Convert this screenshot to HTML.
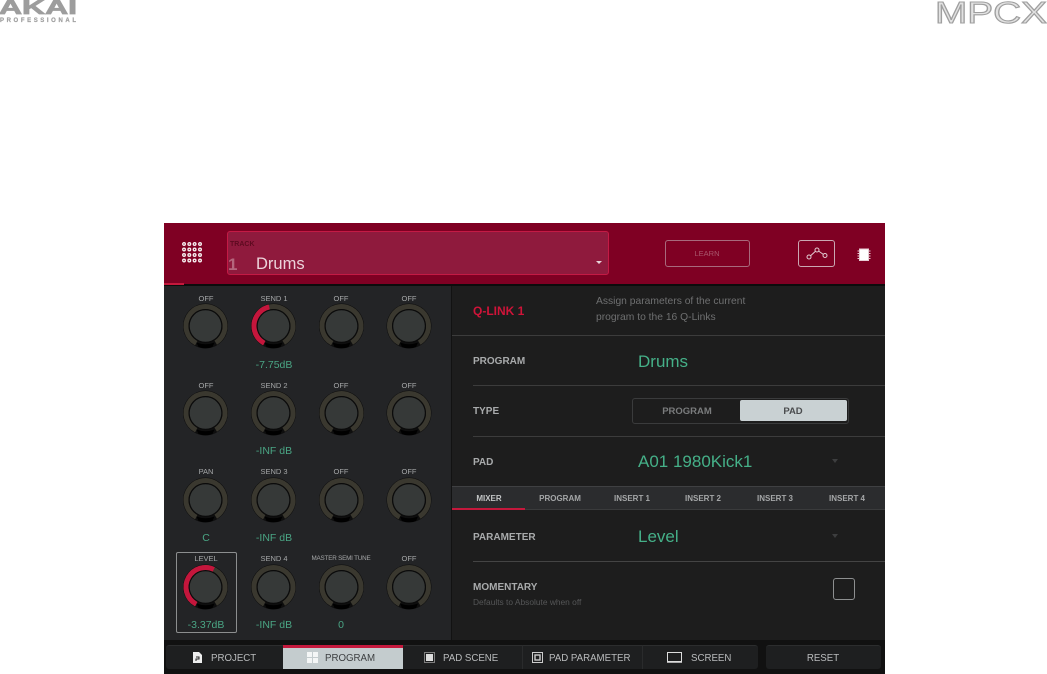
<!DOCTYPE html>
<html><head><meta charset="utf-8">
<style>
html,body{margin:0;padding:0;background:#fff;}
#r{position:relative;width:1047px;height:674px;overflow:hidden;background:#fff;font-family:"Liberation Sans",sans-serif;}
.a{position:absolute;}
.t{position:absolute;white-space:nowrap;line-height:1;}
.c{transform:translateX(-50%);text-align:center;}
.kl{font-size:7.5px;color:#a5a7a8;}
.kv{font-size:10.5px;color:#4aa584;}
.lab{font-size:10px;font-weight:bold;color:#a9abac;}
.val{font-size:17px;color:#45b088;}
.tab{font-size:8px;color:#a5a7a8;font-weight:bold;}
.bt{font-size:9.7px;color:#b9bbbc;}
.hr{position:absolute;height:1px;background:#3c3c3c;right:162px;}
svg{position:absolute;overflow:visible;}
</style></head><body><div id="r">

<svg class="a" style="left:0;top:0" width="1047" height="30">
<text x="-1" y="14" font-family="Liberation Sans" font-weight="bold" font-size="20" fill="#9d9d9d" stroke="#9d9d9d" stroke-width="0.8" textLength="78" lengthAdjust="spacingAndGlyphs">AKAI</text>
<text x="0" y="22" font-family="Liberation Sans" font-weight="bold" font-size="6" fill="#a0a0a0" stroke="#a0a0a0" stroke-width="0.2" textLength="76" lengthAdjust="spacing">PROFESSIONAL</text>
<text x="935" y="23" font-family="Liberation Sans" font-size="31" fill="#e2e2e2" stroke="#9f9f9f" stroke-width="1.1" textLength="112" lengthAdjust="spacingAndGlyphs">MPCX</text>
</svg>

<!-- app shell -->
<div class="a" style="left:164px;top:223px;width:721px;height:451px;background:#1d1d1d"></div>
<div class="a" style="left:164px;top:223px;width:721px;height:61px;background:#7f0023"></div>
<div class="a" style="left:164px;top:284px;width:721px;height:2px;background:#0c0c0c"></div>
<div class="a" style="left:164px;top:283px;width:20px;height:2px;background:#c4183c"></div>
<div class="a" style="left:164px;top:286px;width:287px;height:354px;background:#232426"></div>
<div class="a" style="left:451px;top:286px;width:1px;height:354px;background:#121212"></div>

<!-- pads icon -->
<svg style="left:182px;top:242px" width="22" height="22" fill="none" stroke="#f5ecee" stroke-width="1.4">
<circle cx="2" cy="2" r="1.3"/><circle cx="7.3" cy="2" r="1.3"/><circle cx="12.6" cy="2" r="1.3"/><circle cx="18" cy="2" r="1.3"/>
<circle cx="2" cy="7.5" r="1.3"/><circle cx="7.3" cy="7.5" r="1.3"/><circle cx="12.6" cy="7.5" r="1.3"/><circle cx="18" cy="7.5" r="1.3"/>
<circle cx="2" cy="13" r="1.3"/><circle cx="7.3" cy="13" r="1.3"/><circle cx="12.6" cy="13" r="1.3"/><circle cx="18" cy="13" r="1.3"/>
<circle cx="2" cy="18.5" r="1.3"/><circle cx="7.3" cy="18.5" r="1.3"/><circle cx="12.6" cy="18.5" r="1.3"/><circle cx="18" cy="18.5" r="1.3"/>
</svg>

<!-- track -->
<div class="a" style="left:227px;top:231px;width:380px;height:42px;background:#8f1a3d;border:1px solid #c41a45;border-radius:3px"></div>
<div class="t" style="left:230px;top:241px;font-size:7px;font-weight:bold;color:#5e0a20">TRACK</div>
<div class="t" style="left:228px;top:256px;font-size:17px;font-weight:bold;color:#b5667d">1</div>
<div class="t" style="left:256px;top:256px;font-size:16.5px;color:#ecd3da">Drums</div>
<svg style="left:596px;top:261px" width="7" height="4"><path d="M0 0H6L3 3Z" fill="#e8d5da"/></svg>

<!-- learn -->
<div class="a" style="left:665px;top:240px;width:83px;height:25px;border:1px solid #a8697c;border-radius:3px"></div>
<div class="t c" style="left:707px;top:250px;font-size:7.5px;color:#a8566c">LEARN</div>
<!-- env button -->
<div class="a" style="left:798px;top:240px;width:35px;height:25px;border:1px solid #caa7b2;border-radius:3px"></div>
<svg style="left:806px;top:246px" width="22" height="14" fill="none" stroke="#e3ccd3" stroke-width="1">
<circle cx="3" cy="11" r="2"/><circle cx="11" cy="4" r="2"/><circle cx="19" cy="9.5" r="2"/><path d="M4.6 9.7L9.5 5.3M12.7 5.1L17.3 8.4"/>
</svg>
<!-- chip -->
<svg style="left:857px;top:248px" width="14" height="13">
<rect x="2.5" y="1" width="9" height="11.5" fill="#fff" stroke="#e8cdd5"/>
<path d="M0.5 3H2.5M0.5 5.5H2.5M0.5 8H2.5M0.5 10.5H2.5M11.5 3H13.5M11.5 5.5H13.5M11.5 8H13.5M11.5 10.5H13.5" stroke="#e8cdd5" stroke-width="1"/>
</svg>

<!-- knobs -->
<svg style="left:0;top:0" width="1047" height="674">
<defs>
<g id="k">
<circle r="22.5" fill="#0e0e0e"/>
<circle r="19.5" fill="none" stroke="#3a382f" stroke-width="5" pathLength="360" stroke-dasharray="300 60" transform="rotate(120)"/>
<circle r="17" fill="#0b0b0b"/>
<circle r="15.8" fill="#363938"/>
<path d="M-9 16.5Q0 20 9 16.5L7 21Q0 23.5 -7 21Z" fill="#000"/>
</g>
</defs>
<use href="#k" x="205.5" y="326"/><use href="#k" x="273.5" y="326"/><use href="#k" x="341.5" y="326"/><use href="#k" x="409" y="326"/>
<use href="#k" x="205.5" y="413"/><use href="#k" x="273.5" y="413"/><use href="#k" x="341.5" y="413"/><use href="#k" x="409" y="413"/>
<use href="#k" x="205.5" y="500"/><use href="#k" x="273.5" y="500"/><use href="#k" x="341.5" y="500"/><use href="#k" x="409" y="500"/>
<use href="#k" x="205.5" y="587"/><use href="#k" x="273.5" y="587"/><use href="#k" x="341.5" y="587"/><use href="#k" x="409" y="587"/>
<circle cx="273.5" cy="326" r="19.5" fill="none" stroke="#c4163c" stroke-width="5" pathLength="360" stroke-dasharray="138 222" transform="rotate(120 273.5 326)"/>
<circle cx="205.5" cy="587" r="19.5" fill="none" stroke="#c4163c" stroke-width="5" pathLength="360" stroke-dasharray="176 184" transform="rotate(120 205.5 587)"/>
</svg>
<div class="a" style="left:176px;top:552px;width:59px;height:79px;border:1px solid #8c8e8f;border-radius:2px"></div>

<div class="t c kl" style="left:206px;top:295px">OFF</div><div class="t c kl" style="left:274px;top:295px">SEND 1</div><div class="t c kl" style="left:341px;top:295px">OFF</div><div class="t c kl" style="left:409px;top:295px">OFF</div>
<div class="t c kl" style="left:206px;top:382px">OFF</div><div class="t c kl" style="left:274px;top:382px">SEND 2</div><div class="t c kl" style="left:341px;top:382px">OFF</div><div class="t c kl" style="left:409px;top:382px">OFF</div>
<div class="t c kl" style="left:206px;top:468px">PAN</div><div class="t c kl" style="left:274px;top:468px">SEND 3</div><div class="t c kl" style="left:341px;top:468px">OFF</div><div class="t c kl" style="left:409px;top:468px">OFF</div>
<div class="t c kl" style="left:206px;top:555px">LEVEL</div><div class="t c kl" style="left:274px;top:555px">SEND 4</div><div class="t c kl" style="left:341px;top:556px;font-size:6.3px;letter-spacing:-.2px">MASTER SEMI TUNE</div><div class="t c kl" style="left:409px;top:555px">OFF</div>

<div class="t c kv" style="left:274px;top:360px">-7.75dB</div>
<div class="t c kv" style="left:274px;top:446px">-INF dB</div>
<div class="t c kv" style="left:206px;top:533px">C</div>
<div class="t c kv" style="left:274px;top:533px">-INF dB</div>
<div class="t c kv" style="left:206px;top:620px">-3.37dB</div>
<div class="t c kv" style="left:274px;top:620px">-INF dB</div>
<div class="t c kv" style="left:341px;top:620px">0</div>

<!-- right -->
<div class="t" style="left:473px;top:305px;font-size:12px;font-weight:bold;color:#cf1439">Q-LINK 1</div>
<div class="t" style="left:596px;top:297px;font-size:10.3px;color:#6f7071">Assign parameters of the current</div>
<div class="t" style="left:596px;top:313px;font-size:10.3px;color:#6f7071">program to the 16 Q-Links</div>
<div class="hr" style="left:452px;top:335px"></div>
<div class="t lab" style="left:473px;top:357px">PROGRAM</div>
<div class="t val" style="left:638px;top:353px">Drums</div>
<div class="hr" style="left:473px;top:385px"></div>
<div class="t lab" style="left:473px;top:407px">TYPE</div>
<div class="a" style="left:632px;top:398px;width:215px;height:24px;border:1px solid #3a3b3c;border-radius:3px"></div>
<div class="t c" style="left:687px;top:407px;font-size:9.5px;color:#7a7c7d;font-weight:bold">PROGRAM</div>
<div class="a" style="left:740px;top:400px;width:107px;height:21px;background:#c9d1d3;border-radius:2px"></div>
<div class="t c" style="left:793px;top:407px;font-size:9.5px;color:#4a4c4e;font-weight:bold">PAD</div>
<div class="hr" style="left:473px;top:436px"></div>
<div class="t lab" style="left:473px;top:458px">PAD</div>
<div class="t val" style="left:638px;top:453px">A01 1980Kick1</div>
<svg style="left:832px;top:459px" width="7" height="5"><path d="M0 0H6L3 4Z" fill="#3d3e3f"/></svg>

<!-- tabs -->
<div class="a" style="left:452px;top:486px;width:433px;height:24px;background:#2b2c2e;border-top:1px solid #3f4042;box-sizing:border-box;border-bottom:1px solid #3a3b3c"></div>
<div class="a" style="left:452px;top:508px;width:73px;height:2px;background:#c4183c"></div>
<div class="t c tab" style="left:489px;top:495px;color:#c3c5c6">MIXER</div>
<div class="t c tab" style="left:560px;top:495px">PROGRAM</div>
<div class="t c tab" style="left:632px;top:495px">INSERT 1</div>
<div class="t c tab" style="left:703px;top:495px">INSERT 2</div>
<div class="t c tab" style="left:775px;top:495px">INSERT 3</div>
<div class="t c tab" style="left:847px;top:495px">INSERT 4</div>

<div class="t lab" style="left:473px;top:533px">PARAMETER</div>
<div class="t val" style="left:638px;top:528px">Level</div>
<svg style="left:832px;top:534px" width="7" height="5"><path d="M0 0H6L3 4Z" fill="#3d3e3f"/></svg>
<div class="hr" style="left:473px;top:561px;background:#444"></div>
<div class="t lab" style="left:473px;top:583px">MOMENTARY</div>
<div class="t" style="left:473px;top:598px;font-size:8.4px;color:#555657">Defaults to Absolute when off</div>
<div class="a" style="left:833px;top:578px;width:20px;height:20px;border:1px solid #8d8f90;border-radius:3px"></div>

<!-- bottom -->
<div class="a" style="left:164px;top:640px;width:721px;height:34px;background:#111"></div>
<div class="a" style="left:166px;top:645px;width:592px;height:24px;background:#1e1f20;border-radius:3px;border-top:1px solid #2c2d2e;box-sizing:border-box"></div>
<div class="a" style="left:766px;top:645px;width:115px;height:24px;background:#1e1f20;border-radius:3px;border-top:1px solid #2c2d2e;box-sizing:border-box"></div>
<div class="a" style="left:283px;top:648px;width:120px;height:21px;background:#c4ccce"></div>
<div class="a" style="left:283px;top:645px;width:120px;height:3px;background:#c4183c"></div>
<div class="a" style="left:522px;top:645px;width:1px;height:24px;background:#2a2b2c"></div>
<div class="a" style="left:642px;top:645px;width:1px;height:24px;background:#2a2b2c"></div>

<svg style="left:193px;top:652px" width="9" height="11"><path d="M0 0H6L9 3V11H0Z" fill="#eee"/><path d="M3 5H6V7H3V9" stroke="#222" stroke-width="1" fill="none"/></svg>
<div class="t bt" style="left:211px;top:654px">PROJECT</div>
<svg style="left:307px;top:652px" width="11" height="11" fill="#f4f6f6"><rect width="5" height="5"/><rect x="6" width="5" height="5"/><rect y="6" width="5" height="5"/><rect x="6" y="6" width="5" height="5"/></svg>
<div class="t bt" style="left:325px;top:654px;color:#3d3f41">PROGRAM</div>
<svg style="left:424px;top:652px" width="11" height="11"><rect x="2" y="2" width="7" height="7" fill="#ddd"/><rect x="0.5" y="0.5" width="10" height="10" fill="none" stroke="#ddd" stroke-dasharray="1 1"/></svg>
<div class="t bt" style="left:443px;top:654px">PAD SCENE</div>
<svg style="left:532px;top:652px" width="11" height="11" fill="none" stroke="#ccc"><rect x="0.5" y="0.5" width="10" height="10"/><rect x="3" y="3" width="5" height="5" stroke-width="1.4"/></svg>
<div class="t bt" style="left:549px;top:654px">PAD PARAMETER</div>
<svg style="left:667px;top:652px" width="15" height="11" fill="none" stroke="#ddd"><rect x="0.5" y="0.5" width="14" height="9"/><path d="M0 10H15" stroke-width="1.5"/></svg>
<div class="t bt" style="left:691px;top:654px">SCREEN</div>
<div class="t c bt" style="left:823px;top:654px">RESET</div>

</div></body></html>
